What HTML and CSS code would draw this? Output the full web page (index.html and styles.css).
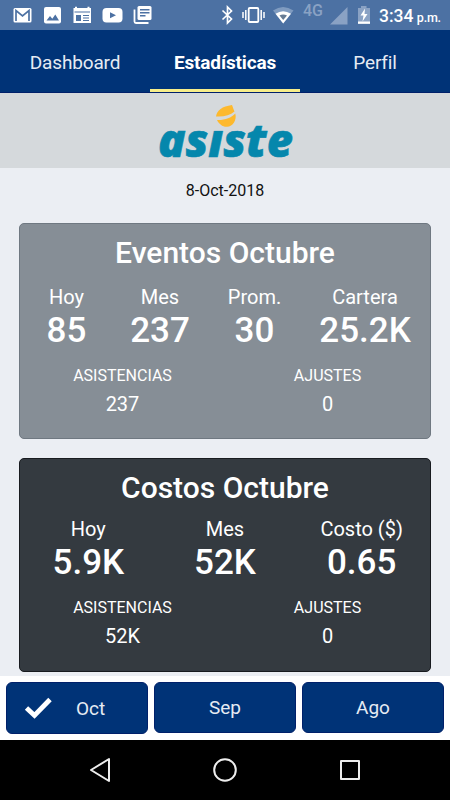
FILE: index.html
```html
<!DOCTYPE html>
<html lang="es">
<head>
  <meta charset="UTF-8">
  <meta name="viewport" content="width=device-width, initial-scale=1.0">
  <title>Estadísticas</title>
  <link rel="stylesheet" href="styles.css">
</head>
<body>

  <!-- Barra de estado -->
  <div class="status-bar">
    <svg class="status-left" width="160" height="30" viewBox="0 0 160 30">
      <rect x="13.5" y="8" width="18" height="14.5" rx="1.5" fill="#fff"/>
      <path d="M16 21V10.5L22.500 16L29 10.500V21" fill="none" stroke="#4c71a3" stroke-width="1.700"/>
      <rect x="44" y="7" width="17" height="16.500" rx="2" fill="#fff"/>
      <path d="M46.500 20.500L50 16L52.300 18.700L55.300 14.500L59 20.500Z" fill="#4c71a3"/>
      <path d="M73.500 8H75V6.800H77V8H87.500V6.800H89.500V8H91V23H73.500Z" fill="#fff"/>
      <path d="M74.500 12H90M83 15.500H89M83 18H89M83 20.500H89" fill="none" stroke="#4c71a3" stroke-width="1.100"/>
      <rect x="76" y="15" width="5" height="6" fill="#4c71a3"/>
      <rect x="102.500" y="8" width="20" height="14.500" rx="4" fill="#fff"/>
      <path d="M110 12.200L116 15.200L110 18.200Z" fill="#4c71a3"/>
      <rect x="137.500" y="6" width="14" height="14" rx="1.500" fill="#fff"/>
      <path d="M134.500 9.500V21.500Q134.500 23 136 23H148.500" fill="none" stroke="#fff" stroke-width="1.800"/>
      <path d="M140 9.700H149.500M140 12.700H149.500M140 15.700H145.500" stroke="#4c71a3" stroke-width="1.500"/>
    </svg>
    <div class="status-right">
      <svg width="80" height="30" viewBox="220 0 80 30">
        <path d="M222.500 10.500L231.500 19L227.500 23V7L231.500 11L222.500 19.500" fill="none" stroke="#fff" stroke-width="1.700"/>
        <rect x="248.700" y="8" width="9.600" height="14" rx="1" fill="none" stroke="#fff" stroke-width="1.800"/>
        <path d="M245.800 10V20M243 12V18M261.200 10V20M264 12V18" stroke="#fff" stroke-width="1.500"/>
        <path d="M273 10.500Q283 3.500 293.500 10.500L283.200 23.500Z" fill="#7f9bc0"/>
        <path d="M275.500 13.800Q283 8.500 291 13.800L283.200 23.500Z" fill="#fff"/>
        <path d="M279.500 15.500Q283 13.500 287 15.500L283.200 20Z" fill="#667b94"/>
      </svg>
      <span class="net">4G</span>
      <svg width="50" height="30" viewBox="328 0 50 30">
        <path d="M330 24.500L347.500 7V24.500Z" fill="#8aa2c4"/>
        <path d="M361 6H366.500V8H370V23.800H358V8H361Z" fill="#8aa2c4"/>
        <path d="M358 21.500H370V23.800H358Z" fill="#fff"/>
        <path d="M365 8.500L360.500 15.500H363.500L362.500 21.500L367.500 14H364.500Z" fill="#fff"/>
      </svg>
      <span class="clock">3:34 <small>p.m.</small></span>
    </div>
  </div>

  <!-- Pestañas -->
  <nav class="tabs">
    <a class="tab"><span>Dashboard</span></a>
    <a class="tab active"><span>Estadísticas</span></a>
    <a class="tab"><span>Perfil</span></a>
  </nav>

  <!-- Logo -->
  <div class="logo">
    <svg width="150" height="75" viewBox="150 93 150 75">
      <text class="logo-text" x="158" y="157.300" textLength="135" lengthAdjust="spacingAndGlyphs">asiste</text>
      <rect x="213" y="108" width="24" height="22.500" fill="#d5d9dc"/>
      <path d="M216 116.500C217 110 222 106.500 232 105C233 107.500 233.500 109.500 234.500 111.500C230 115.300 224 117 216 116.500Z" fill="#fdb92e"/>
      <path d="M217 120C225 120.300 231 118 235.300 113.500C237 120 233 126.500 227 126.800C222.500 127 219 124 217 120Z" fill="#fdb92e"/>
    </svg>
  </div>

  <main class="content">
    <p class="date">8-Oct-2018</p>

    <section class="card card-eventos">
      <h2>Eventos Octubre</h2>
      <div class="stats four">
        <div class="stat"><span>Hoy</span><strong>85</strong></div>
        <div class="stat"><span>Mes</span><strong>237</strong></div>
        <div class="stat"><span>Prom.</span><strong>30</strong></div>
        <div class="stat"><span>Cartera</span><strong>25.2K</strong></div>
      </div>
      <div class="details">
        <div class="detail"><span>ASISTENCIAS</span><b>237</b></div>
        <div class="detail"><span>AJUSTES</span><b>0</b></div>
      </div>
    </section>

    <section class="card card-costos">
      <h2>Costos Octubre</h2>
      <div class="stats">
        <div class="stat"><span>Hoy</span><strong>5.9K</strong></div>
        <div class="stat"><span>Mes</span><strong>52K</strong></div>
        <div class="stat"><span>Costo ($)</span><strong>0.65</strong></div>
      </div>
      <div class="details">
        <div class="detail"><span>ASISTENCIAS</span><b>52K</b></div>
        <div class="detail"><span>AJUSTES</span><b>0</b></div>
      </div>
    </section>
  </main>

  <!-- Selector de mes -->
  <div class="months">
    <button class="month selected">
      <svg width="28" height="22" viewBox="0 0 28 22">
        <path d="M2.500 11L10.500 18.500L26 2.500" fill="none" stroke="#fff" stroke-width="4.800"/>
      </svg>
      <span>Oct</span>
    </button>
    <button class="month">Sep</button>
    <button class="month">Ago</button>
  </div>

  <!-- Botones de Android -->
  <div class="android-nav">
    <svg width="450" height="60" viewBox="0 0 450 60">
      <g fill="none" stroke="#eee" stroke-width="2" stroke-linejoin="round">
        <path d="M109 19V41L91 30Z"/>
        <circle cx="225" cy="30" r="10.800"/>
        <rect x="341" y="21" width="18" height="18"/>
      </g>
    </svg>
  </div>

</body>
</html>
```

FILE: styles.css
```css
* {
  box-sizing: border-box;
}

body {
  margin: 0;
  width: 450px;
  height: 800px;
  display: flex;
  flex-direction: column;
  overflow: hidden;
  background-color: #ebeef3;
  font-family: Roboto, sans-serif;
}

svg {
  display: block;
  overflow: visible;
}

/* Barra de estado */
.status-bar {
  height: 30px;
  display: flex;
  justify-content: space-between;
  background-color: #4c71a3;
  color: #fff;
}

.status-right {
  width: 230px;
  display: flex;
}

.net {
  width: 28px;
  padding-left: 3px;
  font-size: 16px;
  font-weight: 500;
  line-height: 22px;
  color: #8aa2c4;
}

.clock {
  padding-left: 1px;
  font-size: 17.5px;
  font-weight: 500;
  line-height: 32px;
  white-space: nowrap;
}

.clock small {
  font-size: 12.5px;
  margin-left: -1px;
  letter-spacing: -0.2px;
}

/* Pestañas */
.tabs {
  height: 63px;
  display: flex;
  background-color: #003377;
  border-bottom: 1px solid #00206a;
}

.tab {
  flex: 1;
  padding-top: 3px;
  border-bottom: 3px solid transparent;
  text-align: center;
  font-size: 19px;
  letter-spacing: -0.15px;
  line-height: 60px;
  color: #e6ebf3;
}

.tab.active {
  border-bottom-color: #f7ee8a;
  font-weight: 700;
  color: #fff;
}

.logo {
  height: 75px;
  display: flex;
  justify-content: center;
  background-color: #d5d9dc;
}

.logo-text {
  font-family: "Open Sans", sans-serif;
  font-size: 46px;
  font-weight: 800;
  font-style: italic;
  fill: #0587ac;
  stroke: #0587ac;
  stroke-width: 0.6px;
}

.content {
  height: 508px;
  padding: 0 19px;
}

.date {
  margin: 0 0 10px;
  text-align: center;
  font-size: 16px;
  line-height: 45px;
  color: #111;
}

/* Tarjetas */
.card {
  padding-top: 8px;
  border: 1px solid;
  border-radius: 5px;
  color: #fff;
}

.card-eventos {
  height: 216px;
  margin-bottom: 19px;
  background-color: #868e96;
  border-color: #6f7881;
}

.card-costos {
  height: 214px;
  background-color: #343a40;
  border-color: #181b1f;
}

.card h2 {
  margin: 0 0 10px;
  text-align: center;
  font-size: 30px;
  font-weight: 500;
  line-height: 41px;
}

.card-costos h2 {
  margin-bottom: 7px;
}

.stats {
  display: grid;
  grid-template-columns: repeat(3, 1fr);
}

.stats.four {
  grid-template-columns: 93px 94px 95px 1fr;
  padding-right: 2px;
}

.stat,
.detail {
  display: flex;
  flex-direction: column;
  align-items: center;
}

.stat span {
  font-size: 20px;
  line-height: 28px;
}

.stat strong {
  font-size: 35px;
  font-weight: 500;
  line-height: 39px;
}

.details {
  display: grid;
  grid-template-columns: 1fr 1fr;
  margin-top: 14px;
}

.detail span {
  font-size: 16px;
  line-height: 24px;
}

.detail b {
  margin-top: 2px;
  font-size: 20px;
  font-weight: 400;
  line-height: 28px;
}

/* Selector de mes */
.months {
  height: 64px;
  display: grid;
  grid-template-columns: repeat(3, 1fr);
  align-items: start;
  gap: 6px;
  padding: 6px 6px 0;
  background-color: #fff;
}

.month {
  height: 51px;
  padding: 0;
  border: 1px solid #00206a;
  border-radius: 6px;
  background-color: #003377;
  font-family: inherit;
  font-size: 19px;
  color: #e6ebf3;
}

.month.selected {
  height: 52px;
  display: flex;
  align-items: center;
  gap: 24px;
  padding-left: 17px;
}

.android-nav {
  height: 60px;
  background-color: #000;
}
```
